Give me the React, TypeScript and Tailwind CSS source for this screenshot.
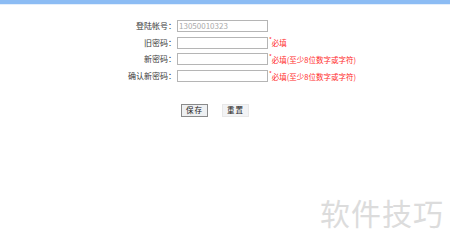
import React from "react";

const font = { fontFamily: '"Noto Sans CJK SC", "Noto Sans", sans-serif' };

function Row({ label, value, note }: { label: string; value?: string; note?: string }) {
  return (
    <div className="flex items-center h-[16.8px]">
      <div className="w-[78px] text-right text-[8px] text-[#3a3a3a] leading-none">{label}</div>
      <div className="ml-[1px] w-[91px] h-[12px] border border-[#b5b5b5] bg-white flex items-center px-[1px] text-[8px] text-[#aaa] leading-none">
        {value}
      </div>
      <div className="ml-[1px] text-[7.5px] text-[#ff2a2a] leading-none flex items-start">
        {note && (
          <>
            <span className="text-[6px] -mt-[2px]">*</span>
            <span>{note}</span>
          </>
        )}
      </div>
    </div>
  );
}

export default function App() {
  return (
    <div className="w-[450px] h-[251px] bg-white relative overflow-hidden" style={font}>
      <div className="h-[4px] bg-[#8cbcf4]" />
      <div className="h-[1px] bg-[#e4effc]" />
      <div className="pl-[98px] pt-[12.5px] flex flex-col">
        <Row label="登陆帐号：" value="13050010323" />
        <Row label="旧密码：" note="必填" />
        <Row label="新密码：" note="必填(至少8位数字或字符)" />
        <Row label="确认新密码：" note="必填(至少8位数字或字符)" />
      </div>
      <div className="flex pl-[181px] mt-[19px] gap-[14px]">
        <button className="w-[27px] h-[13px] border border-[#8a8a8a] bg-[#eef0f2] text-[7.5px] text-[#222] leading-none flex items-center justify-center tracking-[1px]">
          保存
        </button>
        <button className="w-[27px] h-[13px] border border-[#e8e8e8] bg-[#f2f3f5] text-[7.5px] text-[#222] leading-none flex items-center justify-center tracking-[1px]">
          重置
        </button>
      </div>
      <div className="absolute left-[320px] top-[197px] text-[30px] text-[#dcdcdc] tracking-[1px] leading-none">
        软件技巧
      </div>
    </div>
  );
}
